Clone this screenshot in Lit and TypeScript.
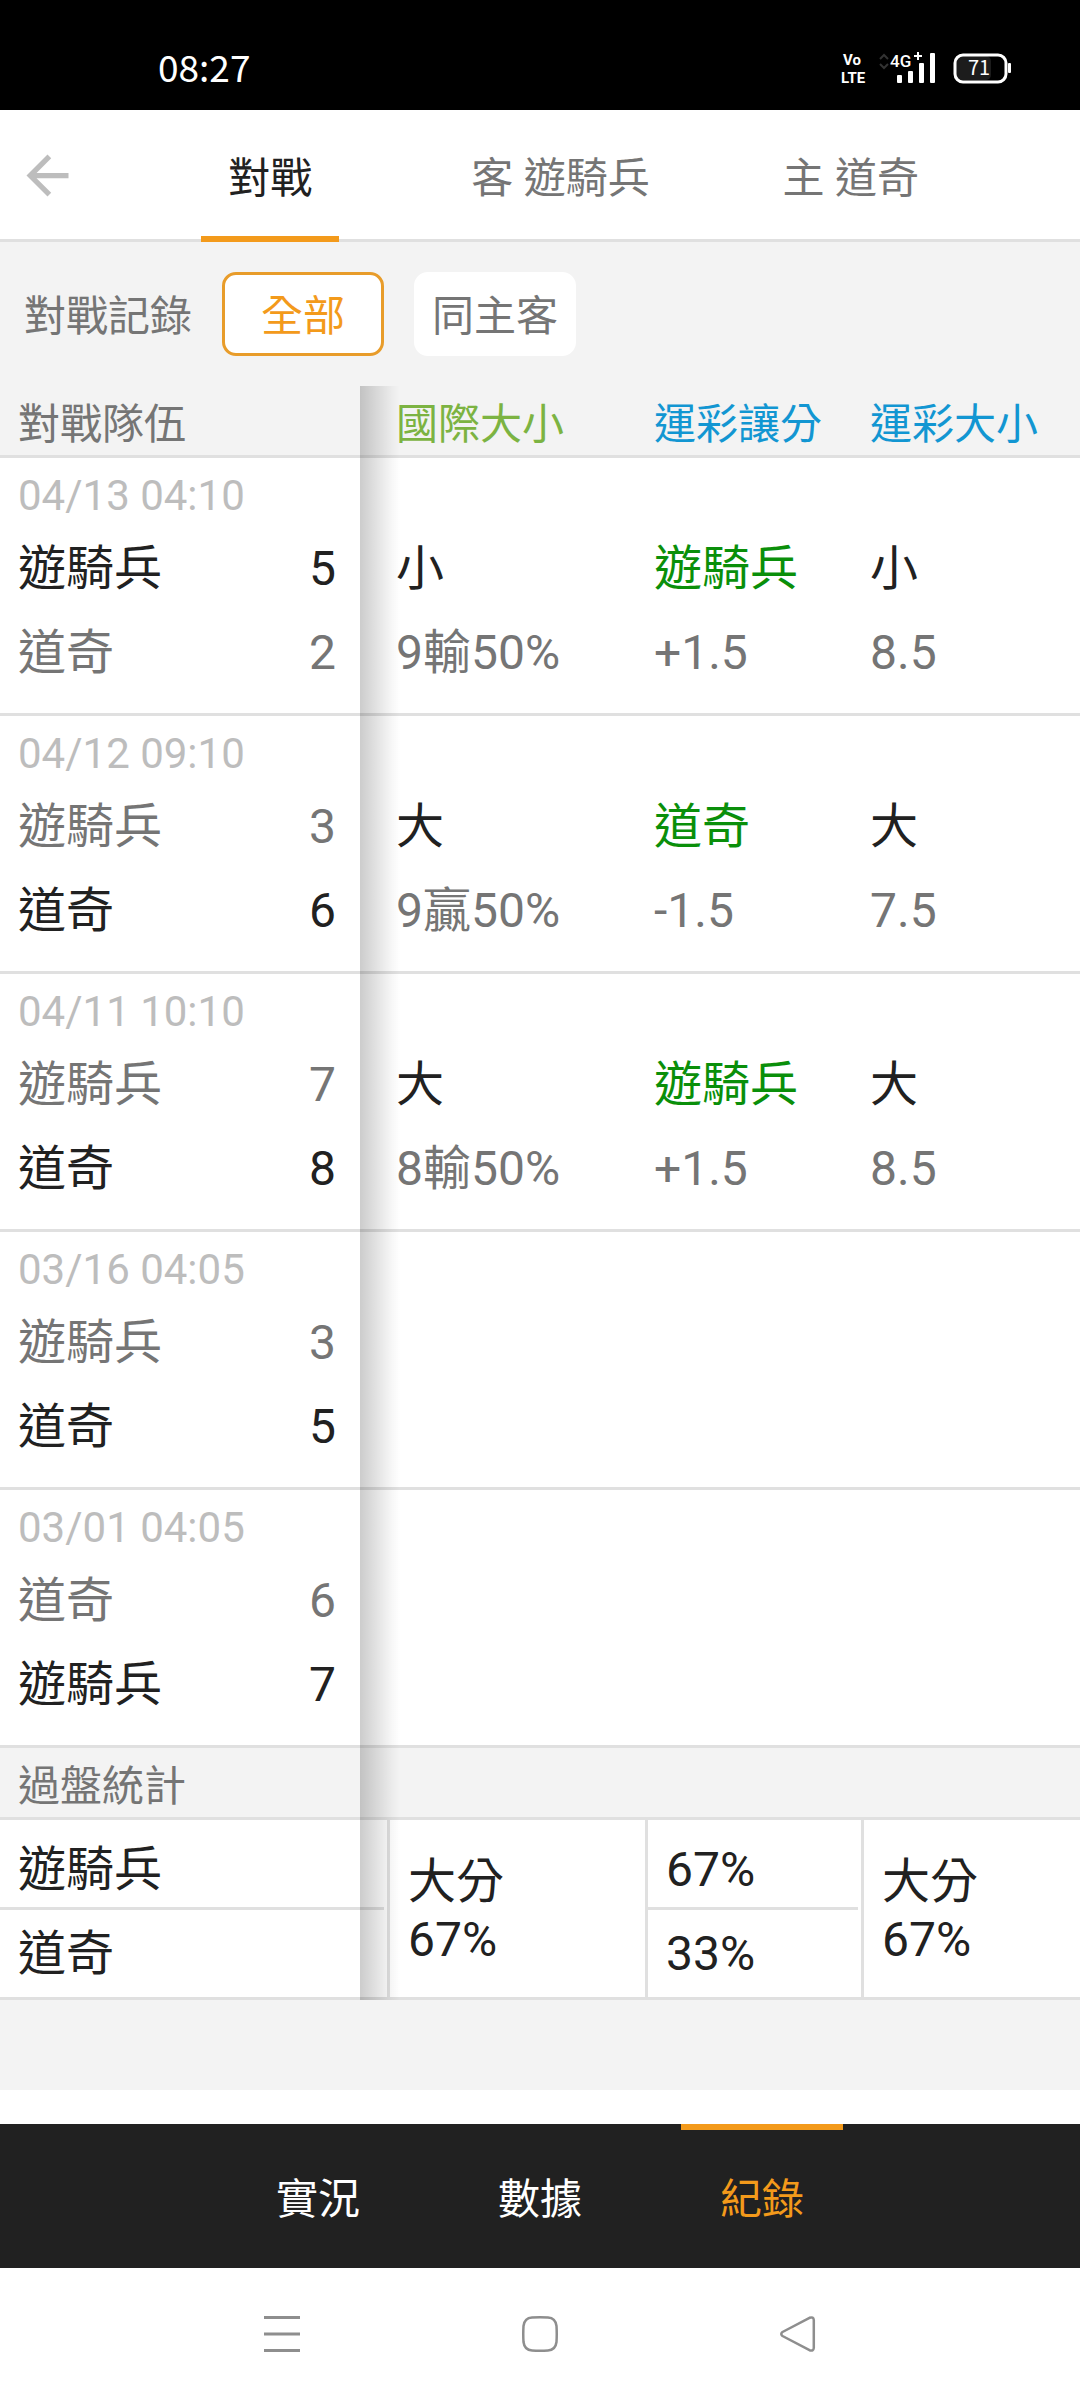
import { LitElement, html, css, nothing } from "lit";
import { customElement, state } from "lit/decorators.js";
import { classMap } from "lit/directives/class-map.js";

interface Side {
  name: string;
  score: number;
}

interface Line {
  pick: string;
  detail: string;
}

interface Match {
  time: string;
  away: Side;
  home: Side;
  lines: Line[];
}

const MATCHES: Match[] = [
  {
    time: "04/13 04:10",
    away: { name: "遊騎兵", score: 5 },
    home: { name: "道奇", score: 2 },
    lines: [
      { pick: "小", detail: "9輸50%" },
      { pick: "遊騎兵", detail: "+1.5" },
      { pick: "小", detail: "8.5" },
    ],
  },
  {
    time: "04/12 09:10",
    away: { name: "遊騎兵", score: 3 },
    home: { name: "道奇", score: 6 },
    lines: [
      { pick: "大", detail: "9贏50%" },
      { pick: "道奇", detail: "-1.5" },
      { pick: "大", detail: "7.5" },
    ],
  },
  {
    time: "04/11 10:10",
    away: { name: "遊騎兵", score: 7 },
    home: { name: "道奇", score: 8 },
    lines: [
      { pick: "大", detail: "8輸50%" },
      { pick: "遊騎兵", detail: "+1.5" },
      { pick: "大", detail: "8.5" },
    ],
  },
  {
    time: "03/16 04:05",
    away: { name: "遊騎兵", score: 3 },
    home: { name: "道奇", score: 5 },
    lines: [],
  },
  {
    time: "03/01 04:05",
    away: { name: "道奇", score: 6 },
    home: { name: "遊騎兵", score: 7 },
    lines: [],
  },
];

@customElement("status-bar")
export class StatusBar extends LitElement {
  static styles = css`
    :host {
      display: block;
      background: #000;
      color: #fff;
      font-family: "Noto Sans CJK TC", sans-serif;
    }
    .bar {
      display: flex;
      align-items: center;
      justify-content: space-between;
      height: 86px;
      padding: 24px 68px 0 158px;
    }
    .time {
      font-size: 37px;
      line-height: 80px;
      padding-bottom: 2px;
    }
    .icons {
      padding-top: 8px;
    }
    .volte {
      font-family: "Liberation Sans Narrow", Roboto, sans-serif;
      font-weight: 700;
      font-size: 15px;
    }
    .net {
      font-family: Roboto, sans-serif;
      font-weight: 500;
      font-size: 17px;
    }
    .level {
      font-family: "Noto Sans CJK TC", sans-serif;
      font-size: 20px;
    }
  `;

  render() {
    return html`
      <div class="bar">
        <span class="time">08:27</span>
        <div class="icons">
          <svg width="172" height="44" viewBox="840 47 172 44" role="img" aria-label="VoLTE 4G+ 71%">
            <g fill="#fff">
              <text class="volte" x="843" y="66">Vo</text>
              <text class="volte" x="841" y="84">LTE</text>
              <text class="net" x="890" y="68">4G</text>
              <path d="M914 56h3v-3h2v3h3v2h-3v3h-2v-3h-3z" />
              <rect x="897" y="76" width="5" height="8" rx="1" />
              <rect x="908" y="72" width="5" height="12" rx="1" />
              <rect x="919" y="64" width="5" height="20" rx="1" />
              <rect x="930" y="54" width="5" height="30" rx="1" />
              <rect x="1008" y="64" width="3" height="10" rx="1" />
            </g>
            <path d="M880 60l4-4 4 4M880 65l4 4 4-4" fill="none" stroke="#333" stroke-width="2" />
            <rect x="956" y="57" width="35" height="24" rx="5" fill="#1c1c1c" />
            <rect x="955" y="56" width="51" height="27" rx="8" fill="none" stroke="#fff" stroke-width="3" />
            <text class="level" x="968" y="76" fill="#fff">71</text>
          </svg>
        </div>
      </div>
    `;
  }
}

@customElement("match-table")
export class MatchTable extends LitElement {
  static styles = css`
    :host {
      display: block;
      overflow-x: auto;
    }
    .frame {
      position: relative;
    }
    .edge {
      position: absolute;
      top: 0;
      bottom: 0;
      left: 360px;
      width: 40px;
      background: linear-gradient(to right, rgba(0, 0, 0, 0.2), rgba(0, 0, 0, 0.03) 32px, transparent);
      pointer-events: none;
    }
    table {
      width: 100%;
      min-width: 1060px;
      table-layout: fixed;
      border-collapse: separate;
      border-spacing: 0;
      font-size: 48px;
      color: #212121;
    }
    .col-team {
      width: 387px;
    }
    .col-total {
      width: 258px;
    }
    .col-spread {
      width: 216px;
    }
    th,
    td {
      padding: 0;
      font-weight: 400;
      text-align: left;
      vertical-align: top;
    }
    .head th {
      box-sizing: border-box;
      height: 72px;
      padding: 9px 0 0 9px;
      border-bottom: 3px solid #e0e0e0;
      font-size: 42px;
      line-height: 60px;
      color: #757575;
    }
    .head .lead {
      padding-left: 18px;
    }
    .head .intl {
      color: #7cb342;
    }
    .head .lottery {
      color: #1296d2;
    }
    .match > * {
      padding: 9px 0 18px 9px;
      border-bottom: 3px solid #e0e0e0;
      background: #fff;
    }
    .match .lead {
      padding-left: 18px;
      padding-right: 51px;
    }
    .time {
      height: 60px;
      font-size: 42px;
      line-height: 58px;
      color: #bdbdbd;
    }
    .side {
      display: flex;
      justify-content: space-between;
      line-height: 84px;
      color: #757575;
    }
    .won {
      color: #212121;
    }
    .odds {
      padding-top: 60px;
    }
    .pick,
    .detail {
      line-height: 84px;
    }
    .cover {
      color: #0a8f0a;
    }
    .detail {
      color: #757575;
    }
    .stat > * {
      background: #fff;
    }
    .half {
      box-sizing: border-box;
      height: 90px;
      margin-right: 3px;
      padding-top: 13px;
      border-bottom: 3px solid #e0e0e0;
      line-height: 74px;
    }
    .last .half {
      margin-right: 0;
      padding-top: 0;
      line-height: 87px;
    }
    .lead .half {
      padding-left: 18px;
    }
    .stat td {
      border-left: 3px solid #e0e0e0;
    }
    .stat td .half {
      padding-left: 18px;
    }
    .stat .both {
      padding: 4px 18px 0;
      border-bottom: 3px solid #e0e0e0;
      vertical-align: middle;
      line-height: 58px;
    }
  `;

  private side(side: Side, other: Side) {
    return html`
      <div class=${classMap({ side: true, won: side.score > other.score })}>
        <span>${side.name}</span><span>${side.score}</span>
      </div>
    `;
  }

  private odds(line: Line | undefined, index: number) {
    return html`
      <td>
        ${line
          ? html`
              <div class="odds">
                <div class=${classMap({ pick: true, cover: index === 1 })}>${line.pick}</div>
                <div class="detail">${line.detail}</div>
              </div>
            `
          : nothing}
      </td>
    `;
  }

  render() {
    return html`
      <div class="frame">
        <table>
          <colgroup>
            <col class="col-team" />
            <col class="col-total" />
            <col class="col-spread" />
            <col />
          </colgroup>
          <thead>
            <tr class="head">
              <th class="lead" scope="col">對戰隊伍</th>
              <th class="intl" scope="col">國際大小</th>
              <th class="lottery" scope="col">運彩讓分</th>
              <th class="lottery" scope="col">運彩大小</th>
            </tr>
          </thead>
          <tbody>
            ${MATCHES.map(
              (m) => html`
                <tr class="match">
                  <th class="lead" scope="row">
                    <div class="time">${m.time}</div>
                    ${this.side(m.away, m.home)} ${this.side(m.home, m.away)}
                  </th>
                  ${[0, 1, 2].map((i) => this.odds(m.lines[i], i))}
                </tr>
              `
            )}
          </tbody>
          <tbody>
            <tr class="head">
              <th class="lead" scope="rowgroup" colspan="4">過盤統計</th>
            </tr>
            <tr class="stat">
              <th class="lead" scope="row"><div class="half">遊騎兵</div></th>
              <td class="both" rowspan="2">大分<br />67%</td>
              <td><div class="half">67%</div></td>
              <td class="both" rowspan="2">大分<br />67%</td>
            </tr>
            <tr class="stat last">
              <th class="lead" scope="row"><div class="half">道奇</div></th>
              <td><div class="half">33%</div></td>
            </tr>
          </tbody>
        </table>
        <div class="edge"></div>
      </div>
    `;
  }
}

@customElement("app-root")
export class AppRoot extends LitElement {
  @state() private tab = 0;
  @state() private filter = 0;
  @state() private section = 2;

  static styles = css`
    :host {
      display: block;
      font-family: Roboto, "Noto Sans CJK TC", sans-serif;
      font-size: 42px;
      color: #212121;
    }
    button {
      margin: 0;
      padding: 0;
      border: 0;
      background: none;
      font: inherit;
      color: inherit;
      cursor: pointer;
    }
    svg {
      display: block;
    }
    .page {
      display: flex;
      flex-direction: column;
      min-height: 100vh;
      background: #fff;
    }
    .top {
      display: flex;
      height: 129px;
      padding-right: 84px;
      border-bottom: 3px solid #e0e0e0;
    }
    .back {
      display: flex;
      align-items: center;
      width: 125px;
      padding: 2px 0 0 16px;
    }
    .tabs {
      flex: 1;
      display: grid;
      grid-template-columns: repeat(3, 1fr);
      justify-items: center;
    }
    .tab {
      box-sizing: border-box;
      height: 132px;
      padding: 2px 27px 0;
      border-bottom: 6px solid transparent;
      color: #757575;
      white-space: nowrap;
    }
    .tab.on {
      border-color: #f39a1b;
      color: #212121;
    }
    main {
      padding-bottom: 90px;
      background: #f3f3f3;
    }
    .filters {
      display: flex;
      align-items: center;
      gap: 30px;
      padding: 30px 24px;
      color: #757575;
    }
    .label {
      padding-bottom: 4px;
    }
    .chip {
      box-sizing: border-box;
      width: 162px;
      height: 84px;
      padding-bottom: 4px;
      border: 3px solid #fff;
      border-radius: 14px;
      background: #fff;
    }
    .chip.on {
      border-color: #e89c2a;
      color: #f39a1b;
    }
    .bottom {
      display: flex;
      justify-content: center;
      gap: 60px;
      margin-top: auto;
      background: #212121;
      color: #fff;
    }
    .section {
      width: 162px;
      height: 144px;
      border-top: 6px solid transparent;
      padding-bottom: 8px;
    }
    .section.on {
      border-color: #f39a1b;
      color: #f39a1b;
    }
    .system {
      display: flex;
      justify-content: center;
      gap: 222px;
      height: 132px;
    }
  `;

  private readonly tabs = ["對戰", "客 遊騎兵", "主 道奇"];
  private readonly filters = ["全部", "同主客"];
  private readonly sections = ["實況", "數據", "紀錄"];

  render() {
    return html`
      <div class="page">
        <status-bar></status-bar>
        <header class="top">
          <button class="back" aria-label="返回">
            <svg width="63" height="63" viewBox="0 0 24 24" fill="#bdbdbd">
              <path d="M20 11H7.83l5.59-5.59L12 4l-8 8 8 8 1.41-1.41L7.83 13H20v-2z" />
            </svg>
          </button>
          <nav class="tabs">
            ${this.tabs.map(
              (t, i) => html`
                <button class=${classMap({ tab: true, on: i === this.tab })} @click=${() => (this.tab = i)}>${t}</button>
              `
            )}
          </nav>
        </header>
        <main>
          <div class="filters">
            <span class="label">對戰記錄</span>
            ${this.filters.map(
              (f, i) => html`
                <button
                  class=${classMap({ chip: true, on: i === this.filter })}
                  aria-pressed=${i === this.filter}
                  @click=${() => (this.filter = i)}
                >${f}</button>
              `
            )}
          </div>
          <match-table></match-table>
        </main>
        <nav class="bottom">
          ${this.sections.map(
            (s, i) => html`
              <button class=${classMap({ section: true, on: i === this.section })} @click=${() => (this.section = i)}>${s}</button>
            `
          )}
        </nav>
        <div class="system">
          <button aria-label="最近使用">
            <svg width="36" height="36" viewBox="0 0 36 36" stroke="#8e8e8e" stroke-width="3">
              <path d="M0 1.5H36M0 18H36M0 34.5H36" />
            </svg>
          </button>
          <button aria-label="主畫面">
            <svg width="36" height="36" viewBox="0 0 36 36" fill="none" stroke="#8e8e8e" stroke-width="2.5">
              <path d="M10 1.5Q18 1 26 1.5Q33.5 2 34.5 10Q35 18 34.5 26Q33.5 34 26 34.5Q18 35 10 34.5Q2.5 34 1.5 26Q1 18 1.5 10Q2.5 2 10 1.5Z" />
            </svg>
          </button>
          <button aria-label="上一頁">
            <svg width="36" height="36" viewBox="0 0 36 36" fill="none" stroke="#8e8e8e" stroke-width="2.5" stroke-linejoin="round">
              <path d="M2.5 16L29.5 1.8Q33.5 0.5 33.8 4V32Q33.5 35.5 29.5 34.2L2.5 20Q0 18 2.5 16Z" />
            </svg>
          </button>
        </div>
      </div>
    `;
  }
}
